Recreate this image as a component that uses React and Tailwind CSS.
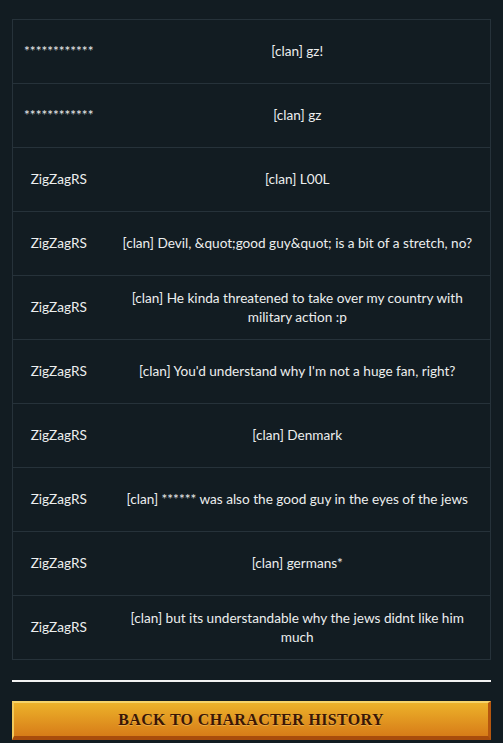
import React from "react";

const rows = [
  ["************", "[clan] gz!"],
  ["************", "[clan] gz"],
  ["ZigZagRS", "[clan] L00L"],
  ["ZigZagRS", "[clan] Devil, &quot;good guy&quot; is a bit of a stretch, no?"],
  ["ZigZagRS", "[clan] He kinda threatened to take over my country with military action :p"],
  ["ZigZagRS", "[clan] You'd understand why I'm not a huge fan, right?"],
  ["ZigZagRS", "[clan] Denmark"],
  ["ZigZagRS", "[clan] ****** was also the good guy in the eyes of the jews"],
  ["ZigZagRS", "[clan] germans*"],
  ["ZigZagRS", "[clan] but its understandable why the jews didnt like him much"],
];

export default function App() {
  return (
    <div className="min-h-[743px] w-full bg-[#121c22] px-3 pt-[19px] pb-[3px] font-['Lato','Open_Sans',sans-serif] text-[#eceeee]">
      <table className="w-full table-fixed border-collapse border border-[#26323a] text-[13.6px]">
        <colgroup>
          <col className="w-[92px]" />
          <col />
        </colgroup>
        <tbody>
          {rows.map(([name, msg], i) => (
            <tr key={i} className="h-[64px] border-t border-[#26323a]">
              <td className="px-1 text-center align-middle">{name}</td>
              <td className="px-[14px] text-center align-middle leading-[19px]">{msg}</td>
            </tr>
          ))}
        </tbody>
      </table>
      <hr className="mt-[20px] border-t-2 border-[#f2f2f2]" />
      <button className="mt-[19px] flex h-[39px] w-full items-center justify-center border-t-2 border-l-2 border-b-[4px] border-r-[3px] border-t-[#f5d36a] border-l-[#f2c95a] border-b-[#a84c0c] border-r-[#b5560e] bg-gradient-to-b from-[#ecb22a] to-[#d77c18] font-['Liberation_Serif',serif] text-[16px] font-bold tracking-[0.35px] text-[#3a1606] [text-shadow:0_1px_0_rgba(255,220,140,0.4)]">
        BACK TO CHARACTER HISTORY
      </button>
    </div>
  );
}
